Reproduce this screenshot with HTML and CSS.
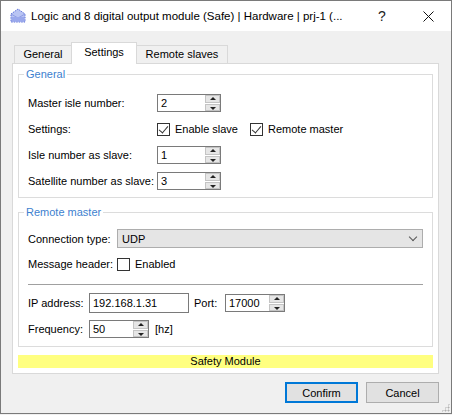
FILE: index.html
```html
<!DOCTYPE html>
<html lang="en">
<head>
  <meta charset="UTF-8">
  <title>Logic and 8 digital output module (Safe)</title>
  <link rel="stylesheet" href="styles.css">
</head>
<body>
  <div class="window">
    <div class="titlebar">
      <svg class="app-icon" width="16" height="15" viewBox="0 0 16 15">
        <polygon points="1,6 8,1 15,6 15,14 1,14" fill="#b9c4f3" stroke="#5a6fd8" stroke-width="1" stroke-dasharray="1.5 1"/>
        <polyline points="1,6 8,10 15,6" fill="none" stroke="#8e9ce6" stroke-width="1"/>
        <rect x="2" y="9" width="12" height="4.5" fill="#9aa8ec"/>
      </svg>
      <span class="title">Logic and 8 digital output module (Safe) | Hardware | prj-1 (...</span>
      <span class="cap-btn help">?</span>
      <span class="cap-btn">
        <svg width="11" height="11" viewBox="0 0 11 11"><path d="M0.5 0.5 L10.5 10.5 M10.5 0.5 L0.5 10.5" stroke="#111" stroke-width="1"/></svg>
      </span>
    </div>

    <div class="client">
      <div class="tabs">
        <div class="tab tab-general">General</div>
        <div class="tab tab-settings active">Settings</div>
        <div class="tab tab-remote">Remote slaves</div>
      </div>

      <div class="panel">
        <fieldset class="group general">
          <legend>General</legend>
          <div class="form-grid">
            <span class="lbl">Master isle number:</span>
            <div class="spin w64"><span class="val">2</span><div class="spin-btns"><i class="up"></i><i class="down"></i></div></div>

            <span class="lbl">Settings:</span>
            <div class="checks">
              <span class="check"><span class="box on"></span>Enable slave</span>
              <span class="check"><span class="box on"></span>Remote master</span>
            </div>

            <span class="lbl">Isle number as slave:</span>
            <div class="spin w64"><span class="val">1</span><div class="spin-btns"><i class="up"></i><i class="down"></i></div></div>

            <span class="lbl">Satellite number as slave:</span>
            <div class="spin w64"><span class="val">3</span><div class="spin-btns"><i class="up"></i><i class="down"></i></div></div>
          </div>
        </fieldset>

        <fieldset class="group remote">
          <legend>Remote master</legend>
          <div class="row">
            <span class="lbl w89">Connection type:</span>
            <div class="select">UDP<span class="chev"></span></div>
          </div>
          <div class="row msg">
            <span class="lbl w89">Message header:</span>
            <span class="check"><span class="box"></span>Enabled</span>
          </div>
          <div class="separator"></div>
          <div class="row ip">
            <span class="lbl w61">IP address:</span>
            <div class="textbox">192.168.1.31</div>
            <span class="lbl port">Port:</span>
            <div class="spin w60"><span class="val">17000</span><div class="spin-btns"><i class="up"></i><i class="down"></i></div></div>
          </div>
          <div class="row freq">
            <span class="lbl w61">Frequency:</span>
            <div class="spin w60"><span class="val">50</span><div class="spin-btns"><i class="up"></i><i class="down"></i></div></div>
            <span class="unit">[hz]</span>
          </div>
        </fieldset>

        <div class="safety">Safety Module</div>
      </div>

      <div class="buttons">
        <button class="btn default">Confirm</button>
        <button class="btn">Cancel</button>
      </div>
      <div class="grip"></div>
    </div>
  </div>
</body>
</html>
```

FILE: styles.css
```css
body {
  margin: 0;
  background: #f0f0f0;
  font-family: 'Liberation Sans', Arial, sans-serif;
  font-size: 11px;
  color: #000;
}
.window {
  width: 450px;
  height: 412px;
  border: 1px solid #7a7a7a;
  background: #f0f0f0;
  display: flex;
  flex-direction: column;
}
.titlebar {
  height: 30px;
  background: #fff;
  display: flex;
  align-items: center;
}
.app-icon {
  margin: 0 5px 1px 9px;
}
.title {
  flex: 1;
  font-size: 11.5px;
  white-space: nowrap;
}
.cap-btn {
  width: 46px;
  height: 30px;
  display: flex;
  align-items: center;
  justify-content: center;
}
.help {
  font-size: 14px;
  color: #222;
}
.client {
  flex: 1;
  padding: 11px 12px 0 11px;
  position: relative;
}
.tabs {
  display: flex;
  align-items: flex-end;
  margin-left: 2px;
}
.tab {
  height: 17px;
  line-height: 17px;
  text-align: center;
  border: 1px solid #d9d9d9;
  border-bottom: none;
  background: #f0f0f0;
  margin-bottom: 0;
}
.tab-general { width: 56px; border-right: none; }
.tab-settings { width: 64px; }
.tab-remote { width: 90px; border-left: none; }
.tab.active {
  height: 21px;
  line-height: 19px;
  background: #fff;
  margin-bottom: -1px;
  position: relative;
  z-index: 1;
}
.panel {
  border: 1px solid #d9d9d9;
  background: #fff;
  padding: 3px 5px 5px;
}
.group {
  margin: 0;
  border: 1px solid #dcdcdc;
  padding: 13px 9px 7px;
  min-width: 0;
}
.group legend {
  color: #3d7fcf;
  line-height: 14px;
  padding: 0 2px;
  margin-left: -4px;
}
.remote {
  margin-top: 7px;
  padding: 10px 9px 8px;
}
.form-grid {
  display: grid;
  grid-template-columns: 129px auto;
  row-gap: 8px;
  align-items: center;
}
.form-grid > * {
  height: 18px;
}
.lbl {
  display: flex;
  align-items: center;
  white-space: nowrap;
}
.w89 { width: 89px; }
.w61 { width: 61px; }
.port { width: 31px; margin-left: 5px; }
.spin {
  height: 18px;
  box-sizing: border-box;
  border: 1px solid #7a7a7a;
  background: #fff;
  display: flex;
  align-items: center;
  justify-content: space-between;
}
.w64 { width: 64px; }
.w60 { width: 60px; }
.spin .val {
  padding-left: 3px;
}
.spin-btns {
  width: 15px;
  height: 16px;
  display: flex;
  flex-direction: column;
  gap: 1px;
  background: #fff;
  margin-right: 0;
}
.spin-btns i {
  flex: 1;
  background: #e6e6e6;
  border: 1px solid #c4c4c4;
  position: relative;
}
.spin-btns i::after {
  content: '';
  position: absolute;
  left: 4px;
  border-left: 3px solid transparent;
  border-right: 3px solid transparent;
}
.spin-btns .up::after {
  top: 1px;
  border-bottom: 3px solid #222;
}
.spin-btns .down::after {
  top: 2px;
  border-top: 3px solid #222;
}
.checks {
  display: flex;
  align-items: center;
  gap: 12px;
}
.check {
  display: inline-flex;
  align-items: center;
  gap: 5px;
  white-space: nowrap;
}
.box {
  width: 13px;
  height: 13px;
  box-sizing: border-box;
  border: 1px solid #333;
  background: #fff;
  position: relative;
}
.box.on::after {
  content: '';
  position: absolute;
  left: 3px;
  top: 0px;
  width: 4px;
  height: 8px;
  border-right: 1px solid #333;
  border-bottom: 1px solid #333;
  transform: rotate(40deg);
}
.row {
  display: flex;
  align-items: center;
}
.select {
  flex: 1;
  height: 19px;
  box-sizing: border-box;
  border: 1px solid #adadad;
  background: #e5e5e5;
  display: flex;
  align-items: center;
  justify-content: space-between;
  padding: 0 6px 0 4px;
}
.chev {
  width: 5px;
  height: 5px;
  border-right: 1px solid #555;
  border-bottom: 1px solid #555;
  transform: rotate(45deg);
  margin-top: -4px;
}
.msg {
  height: 18px;
  margin-top: 7px;
}
.separator {
  height: 1px;
  background: #a0a0a0;
  margin-top: 11px;
}
.ip {
  margin-top: 8px;
}
.textbox {
  width: 100px;
  height: 20px;
  box-sizing: border-box;
  border: 1px solid #7a7a7a;
  padding-left: 3px;
  display: flex;
  align-items: center;
}
.freq {
  margin-top: 7px;
}
.unit {
  margin-left: 6px;
}
.safety {
  margin-top: 8px;
  height: 13px;
  line-height: 13px;
  background: #ffff80;
  text-align: center;
}
.buttons {
  display: flex;
  justify-content: flex-end;
  gap: 8px;
  margin-top: 8px;
  margin-right: 0;
}
.btn {
  width: 73px;
  height: 21px;
  box-sizing: border-box;
  border: 1px solid #adadad;
  background: #e1e1e1;
  font-family: inherit;
  font-size: 11px;
  padding: 0;
}
.btn.default {
  border: 2px solid #0078d7;
}
.grip {
  position: absolute;
  right: 1px;
  bottom: 1px;
  width: 9px;
  height: 9px;
  background-image: radial-gradient(circle, #b0b0b0 0.9px, transparent 1.1px);
  background-size: 3px 3px;
  clip-path: polygon(100% 0, 100% 100%, 0 100%);
}
```
